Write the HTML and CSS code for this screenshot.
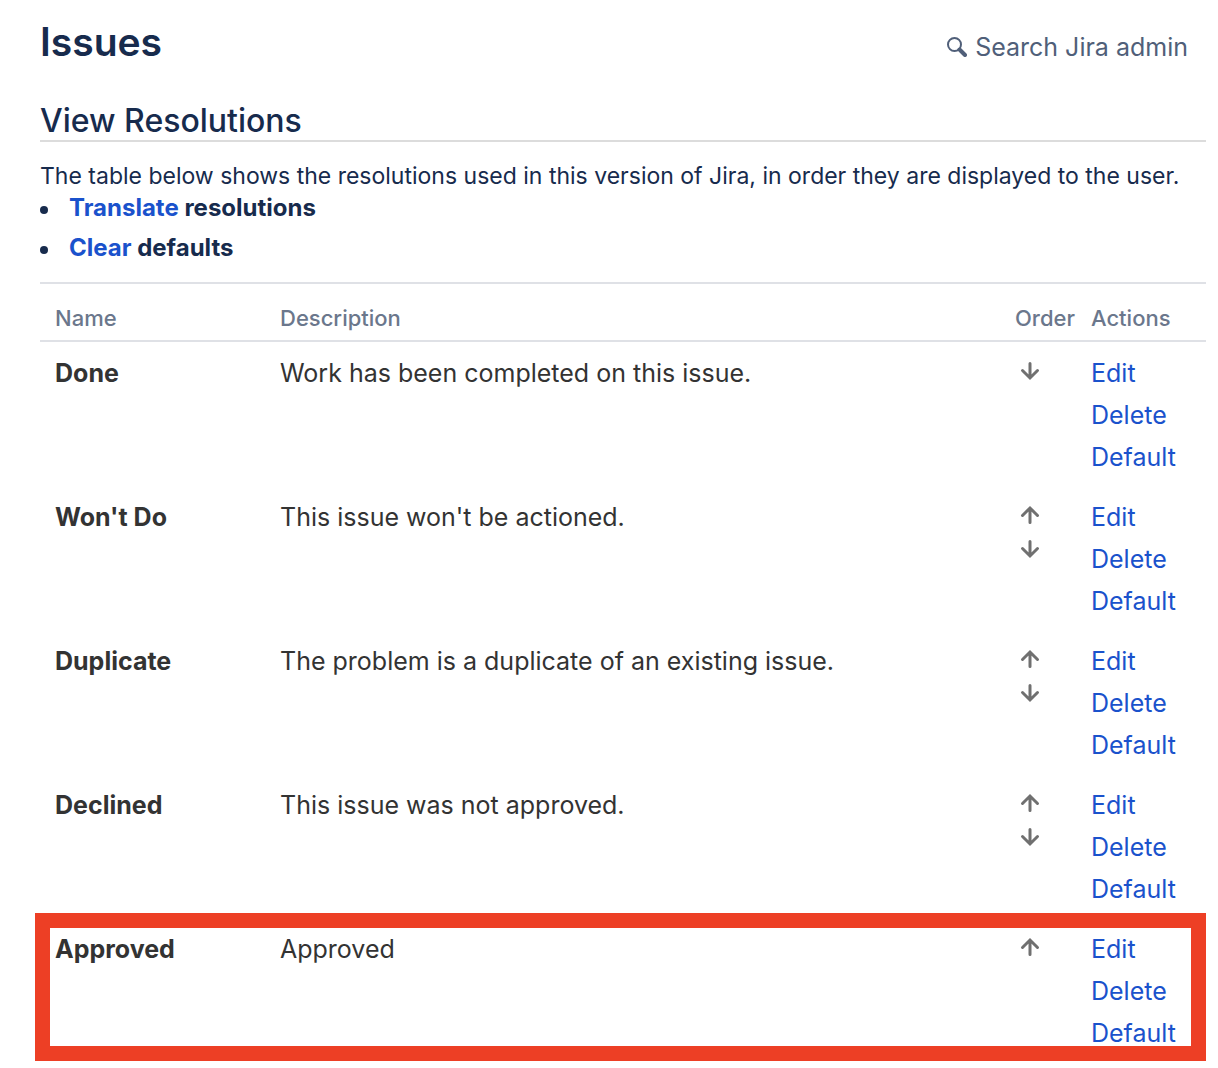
FILE: index.html
```html
<!DOCTYPE html>
<html lang="en">
<head>
<meta charset="utf-8">
<title>Issues - View Resolutions</title>
<link rel="stylesheet" href="styles.css">
</head>
<body>
<svg class="sprite" aria-hidden="true">
  <symbol id="arrow-down" viewBox="0 0 20 20"><path d="M10 2.500v14M2.500 9.500l7.500 7.500 7.500-7.500"/></symbol>
  <symbol id="arrow-up" viewBox="0 0 20 20"><path d="M10 17.500v-14M2.500 10.500l7.500-7.500 7.500 7.500"/></symbol>
</svg>
<header class="header">
  <h1 class="title">Issues</h1>
  <button class="search" type="button">
    <svg class="search-icon" viewBox="0 0 20 20" aria-hidden="true"><circle cx="7.500" cy="7.500" r="6.500"/><path class="handle" d="M12.500 12.500l5.500 5.500"/></svg>
    <span>Search Jira admin</span>
  </button>
</header>
<main class="content">
  <h2 class="subtitle">View Resolutions</h2>
  <p class="intro">The table below shows the resolutions used in this version of Jira, in order they are displayed to the user.</p>
  <ul class="operations">
    <li><a href="#translate">Translate</a> resolutions</li>
    <li><a href="#clear">Clear</a> defaults</li>
  </ul>
  <table class="resolutions">
    <thead>
      <tr><th class="name">Name</th><th>Description</th><th class="order">Order</th><th class="actions">Actions</th></tr>
    </thead>
    <tbody>
      <tr>
        <td class="label">Done</td><td>Work has been completed on this issue.</td>
        <td><a class="move" href="#down" aria-label="Move down"><svg><use href="#arrow-down"/></svg></a></td>
        <td><a class="action" href="#edit">Edit</a><a class="action" href="#delete">Delete</a><a class="action" href="#default">Default</a></td>
      </tr>
      <tr>
        <td class="label">Won't Do</td><td>This issue won't be actioned.</td>
        <td><a class="move" href="#up" aria-label="Move up"><svg><use href="#arrow-up"/></svg></a><a class="move" href="#down" aria-label="Move down"><svg><use href="#arrow-down"/></svg></a></td>
        <td><a class="action" href="#edit">Edit</a><a class="action" href="#delete">Delete</a><a class="action" href="#default">Default</a></td>
      </tr>
      <tr>
        <td class="label">Duplicate</td><td>The problem is a duplicate of an existing issue.</td>
        <td><a class="move" href="#up" aria-label="Move up"><svg><use href="#arrow-up"/></svg></a><a class="move" href="#down" aria-label="Move down"><svg><use href="#arrow-down"/></svg></a></td>
        <td><a class="action" href="#edit">Edit</a><a class="action" href="#delete">Delete</a><a class="action" href="#default">Default</a></td>
      </tr>
      <tr>
        <td class="label">Declined</td><td>This issue was not approved.</td>
        <td><a class="move" href="#up" aria-label="Move up"><svg><use href="#arrow-up"/></svg></a><a class="move" href="#down" aria-label="Move down"><svg><use href="#arrow-down"/></svg></a></td>
        <td><a class="action" href="#edit">Edit</a><a class="action" href="#delete">Delete</a><a class="action" href="#default">Default</a></td>
      </tr>
      <tr class="marked">
        <td class="label">Approved</td><td>Approved</td>
        <td><a class="move" href="#up" aria-label="Move up"><svg><use href="#arrow-up"/></svg></a></td>
        <td><a class="action" href="#edit">Edit</a><a class="action" href="#delete">Delete</a><a class="action" href="#default">Default</a></td>
      </tr>
    </tbody>
  </table>
</main>
</body>
</html>
```

FILE: styles.css
```css
* { box-sizing: border-box; }
body { margin: 0; padding: 16px 12px 0 40px; background: #fff; color: #172b4d; font-family: Inter, "Liberation Sans", sans-serif; font-size: 25px; }
a { color: #1a52cc; text-decoration: none; }
.sprite { display: none; }
.header { display: flex; align-items: center; justify-content: space-between; height: 52px; padding-right: 18px; }
.title { margin: 0; font-size: 39px; font-weight: 600; line-height: 52px; }
.search { display: flex; align-items: center; gap: 8px; margin-top: 10px; padding: 0; border: 0; background: none; color: #505f79; font: inherit; line-height: 32px; }
.search-icon { width: 20px; height: 20px; fill: none; stroke: currentColor; stroke-width: 2; stroke-linecap: round; }
.handle { stroke-width: 4; }
.subtitle { margin: 34px 0 0; border-bottom: 2px solid #dcdcdc; font-size: 32px; font-weight: 500; line-height: 38px; }
.intro { margin: 20px 0 0; font-size: 23px; line-height: 28px; white-space: nowrap; }
.operations { margin: 0; padding: 0; list-style: none; font-size: 24px; font-weight: 700; line-height: 36px; }
.operations li::before { content: ""; display: inline-block; width: 8px; height: 8px; margin-right: 21px; border-radius: 50%; background: currentColor; vertical-align: 2px; }
.operations li + li { margin-top: 4px; }
.resolutions { width: 100%; margin-top: 16px; border-collapse: collapse; table-layout: fixed; color: #333; line-height: 34px; }
th, td { padding: 0 15px; text-align: left; vertical-align: top; }
th { padding-top: 17px; padding-bottom: 5px; border-top: 2px solid #dfe1e6; border-bottom: 2px solid #dfe1e6; color: #6b778c; font-size: 22px; font-weight: 500; }
.name { width: 225px; }
.order { width: 76px; padding-right: 0; }
.actions { width: 130px; }
td { padding-top: 14px; padding-bottom: 4px; }
.label { font-weight: 700; }
.action { display: block; margin-bottom: 8px; }
.move { display: block; height: 34px; padding: 5px; }
.move svg { display: block; width: 20px; height: 20px; fill: none; stroke: #707070; stroke-width: 3; stroke-linecap: round; }
.marked { position: relative; }
.marked .label::after { content: ""; position: absolute; inset: -5px 0 1px -5px; border: 15px solid #ed3f25; pointer-events: none; }
```
